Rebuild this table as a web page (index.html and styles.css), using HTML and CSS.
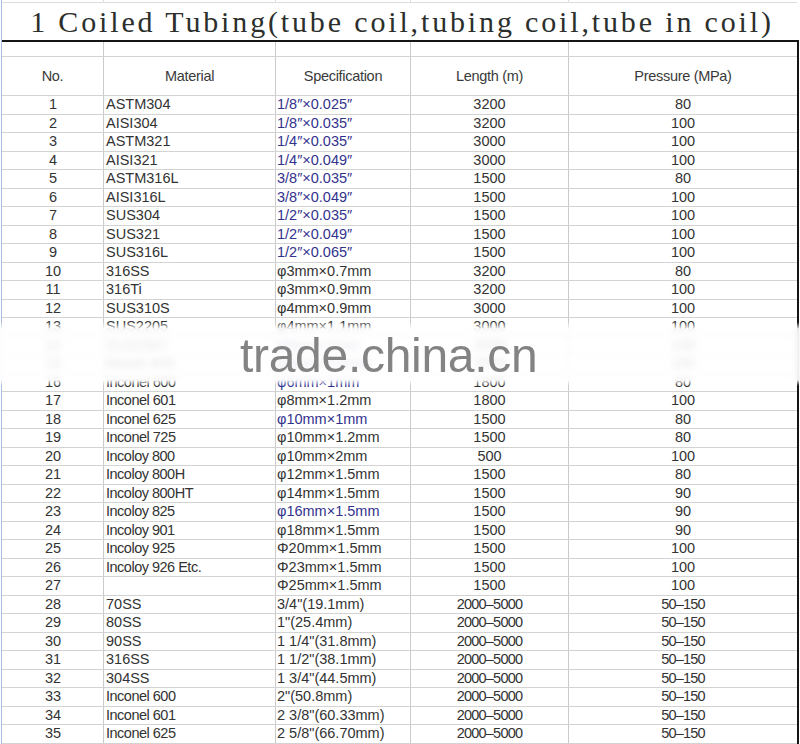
FILE: index.html
```html
<!DOCTYPE html>
<html>
<head>
<meta charset="utf-8">
<title>Coiled Tubing</title>
<link rel="stylesheet" href="styles.css">
</head>
<body>
<div class="sheet">
  <div class="row stub"><div></div><div></div><div></div><div></div><div></div></div>
  <div class="title">1 Coiled Tubing(tube coil,tubing coil,tube in coil)</div>
  <div class="table">
    <div class="row sub"><div></div><div></div><div></div><div></div><div></div></div>
    <div class="row head">
      <div>No.</div><div>Material</div><div>Specification</div><div>Length (m)</div><div>Pressure (MPa)</div>
    </div>
    <div class="row"><div class="no">1</div><div class="mat">ASTM304</div><div class="spec blue">1/8″×0.025″</div><div class="num">3200</div><div class="num">80</div></div>
    <div class="row"><div class="no">2</div><div class="mat">AISI304</div><div class="spec blue">1/8″×0.035″</div><div class="num">3200</div><div class="num">100</div></div>
    <div class="row"><div class="no">3</div><div class="mat">ASTM321</div><div class="spec blue">1/4″×0.035″</div><div class="num">3000</div><div class="num">100</div></div>
    <div class="row"><div class="no">4</div><div class="mat">AISI321</div><div class="spec blue">1/4″×0.049″</div><div class="num">3000</div><div class="num">100</div></div>
    <div class="row"><div class="no">5</div><div class="mat">ASTM316L</div><div class="spec blue">3/8″×0.035″</div><div class="num">1500</div><div class="num">80</div></div>
    <div class="row"><div class="no">6</div><div class="mat">AISI316L</div><div class="spec blue">3/8″×0.049″</div><div class="num">1500</div><div class="num">100</div></div>
    <div class="row"><div class="no">7</div><div class="mat">SUS304</div><div class="spec blue">1/2″×0.035″</div><div class="num">1500</div><div class="num">100</div></div>
    <div class="row"><div class="no">8</div><div class="mat">SUS321</div><div class="spec blue">1/2″×0.049″</div><div class="num">1500</div><div class="num">100</div></div>
    <div class="row"><div class="no">9</div><div class="mat">SUS316L</div><div class="spec blue">1/2″×0.065″</div><div class="num">1500</div><div class="num">100</div></div>
    <div class="row"><div class="no">10</div><div class="mat">316SS</div><div class="spec">φ3mm×0.7mm</div><div class="num">3200</div><div class="num">80</div></div>
    <div class="row"><div class="no">11</div><div class="mat">316Ti</div><div class="spec">φ3mm×0.9mm</div><div class="num">3200</div><div class="num">100</div></div>
    <div class="row"><div class="no">12</div><div class="mat">SUS310S</div><div class="spec">φ4mm×0.9mm</div><div class="num">3000</div><div class="num">100</div></div>
    <div class="row"><div class="no">13</div><div class="mat">SUS2205</div><div class="spec">φ4mm×1.1mm</div><div class="num">3000</div><div class="num">100</div></div>
    <div class="row"><div class="no">14</div><div class="mat">SUS2507</div><div class="spec blue">φ5mm×1mm</div><div class="num">2000</div><div class="num">100</div></div>
    <div class="row"><div class="no">15</div><div class="mat">Monel 400</div><div class="spec blue">φ6mm×0.8mm</div><div class="num">2000</div><div class="num">100</div></div>
    <div class="row"><div class="no">16</div><div class="mat narrow">Inconel 600</div><div class="spec blue">φ6mm×1mm</div><div class="num">1800</div><div class="num">80</div></div>
    <div class="row"><div class="no">17</div><div class="mat narrow">Inconel 601</div><div class="spec">φ8mm×1.2mm</div><div class="num">1800</div><div class="num">100</div></div>
    <div class="row"><div class="no">18</div><div class="mat narrow">Inconel 625</div><div class="spec blue">φ10mm×1mm</div><div class="num">1500</div><div class="num">80</div></div>
    <div class="row"><div class="no">19</div><div class="mat narrow">Inconel 725</div><div class="spec">φ10mm×1.2mm</div><div class="num">1500</div><div class="num">80</div></div>
    <div class="row"><div class="no">20</div><div class="mat narrow">Incoloy 800</div><div class="spec">φ10mm×2mm</div><div class="num">500</div><div class="num">100</div></div>
    <div class="row"><div class="no">21</div><div class="mat narrow">Incoloy 800H</div><div class="spec">φ12mm×1.5mm</div><div class="num">1500</div><div class="num">80</div></div>
    <div class="row"><div class="no">22</div><div class="mat narrow">Incoloy 800HT</div><div class="spec">φ14mm×1.5mm</div><div class="num">1500</div><div class="num">90</div></div>
    <div class="row"><div class="no">23</div><div class="mat narrow">Incoloy 825</div><div class="spec blue">φ16mm×1.5mm</div><div class="num">1500</div><div class="num">90</div></div>
    <div class="row"><div class="no">24</div><div class="mat narrow">Incoloy 901</div><div class="spec">φ18mm×1.5mm</div><div class="num">1500</div><div class="num">90</div></div>
    <div class="row"><div class="no">25</div><div class="mat narrow">Incoloy 925</div><div class="spec">Φ20mm×1.5mm</div><div class="num">1500</div><div class="num">100</div></div>
    <div class="row"><div class="no">26</div><div class="mat narrow">Incoloy 926 Etc.</div><div class="spec">Φ23mm×1.5mm</div><div class="num">1500</div><div class="num">100</div></div>
    <div class="row"><div class="no">27</div><div class="mat"></div><div class="spec">Φ25mm×1.5mm</div><div class="num">1500</div><div class="num">100</div></div>
    <div class="row"><div class="no">28</div><div class="mat">70SS</div><div class="spec">3/4"(19.1mm)</div><div class="num range">2000–5000</div><div class="num range">50–150</div></div>
    <div class="row"><div class="no">29</div><div class="mat">80SS</div><div class="spec">1"(25.4mm)</div><div class="num range">2000–5000</div><div class="num range">50–150</div></div>
    <div class="row"><div class="no">30</div><div class="mat">90SS</div><div class="spec">1 1/4"(31.8mm)</div><div class="num range">2000–5000</div><div class="num range">50–150</div></div>
    <div class="row"><div class="no">31</div><div class="mat">316SS</div><div class="spec">1 1/2"(38.1mm)</div><div class="num range">2000–5000</div><div class="num range">50–150</div></div>
    <div class="row"><div class="no">32</div><div class="mat">304SS</div><div class="spec">1 3/4"(44.5mm)</div><div class="num range">2000–5000</div><div class="num range">50–150</div></div>
    <div class="row"><div class="no">33</div><div class="mat narrow">Inconel 600</div><div class="spec">2"(50.8mm)</div><div class="num range">2000–5000</div><div class="num range">50–150</div></div>
    <div class="row"><div class="no">34</div><div class="mat narrow">Inconel 601</div><div class="spec">2 3/8"(60.33mm)</div><div class="num range">2000–5000</div><div class="num range">50–150</div></div>
    <div class="row"><div class="no">35</div><div class="mat narrow">Inconel 625</div><div class="spec">2 5/8"(66.70mm)</div><div class="num range">2000–5000</div><div class="num range">50–150</div></div>
  </div>
  <div class="wm-band"></div>
  <div class="wm-text">trade.china.cn</div>
</div>
</body>
</html>
```
FILE: styles.css
```css
html, body {
  margin: 0;
  padding: 0;
  background: #ffffff;
}
body {
  width: 800px;
  height: 744px;
  overflow: hidden;
  font-family: "Liberation Sans", Arial, sans-serif;
  color: #333333;
}
.sheet {
  position: relative;
  margin-left: 1px;
  border-left: 1px solid #a9c0e0;
  width: 798px;
  height: 744px;
}
.row {
  display: grid;
  grid-template-columns: 102px 172px 135px 158px 228px;
  box-sizing: border-box;
  height: 18.5px;
  border-bottom: 1px solid #d3d3d3;
}
.row > div {
  box-sizing: border-box;
  border-right: 1px solid #cbcbcb;
  font-size: 14.5px;
  line-height: 17.5px;
  white-space: nowrap;
  overflow: visible;
}
.row > div:last-child {
  border-right: none;
}
.stub {
  height: 3px;
  width: 795px;
  border-bottom-color: #dcdcdc;
}
.stub > div {
  border-right-color: #dcdcdc;
}
.title {
  box-sizing: border-box;
  height: 39px;
  width: 797px;
  border-bottom: 2px solid #151515;
  text-align: center;
  font-family: "Liberation Serif", "Times New Roman", serif;
  font-size: 30px;
  letter-spacing: 2.85px;
  line-height: 37px;
  color: #2c2f2c;
  padding-left: 3px;
}
.table {
  width: 795px;
  border-right: 2px solid #151515;
}
.sub {
  height: 15px;
}
.head {
  height: 39px;
}
.head > div {
  text-align: center;
  line-height: 38px;
  letter-spacing: -0.3px;
  color: #3a3a3a;
}
.no {
  text-align: center;
  padding-left: 1px;
}
.mat {
  padding-left: 2px;
}
.mat.narrow {
  letter-spacing: -0.5px;
}
.spec {
  padding-left: 1px;
}
.blue {
  color: #33338e;
}
.num {
  text-align: center;
}
.num.range {
  letter-spacing: -0.8px;
}
.wm-band {
  position: absolute;
  left: -2px;
  top: 322px;
  width: 802px;
  height: 64px;
  background: linear-gradient(to bottom,
    rgba(255,255,255,0) 0px,
    rgba(255,255,255,0.88) 7px,
    rgba(255,255,255,0.88) 58px,
    rgba(255,255,255,0) 64px);
}
.wm-band::before {
  content: "";
  position: absolute;
  left: 0;
  right: 0;
  top: 6px;
  bottom: 5px;
  backdrop-filter: blur(3px);
  -webkit-backdrop-filter: blur(3px);
}
.wm-text {
  position: absolute;
  left: 238px;
  top: 332px;
  font-family: "Liberation Sans", Arial, sans-serif;
  font-size: 48px;
  line-height: 48px;
  letter-spacing: -0.3px;
  color: rgba(118,118,118,0.9);
  white-space: nowrap;
}
```
